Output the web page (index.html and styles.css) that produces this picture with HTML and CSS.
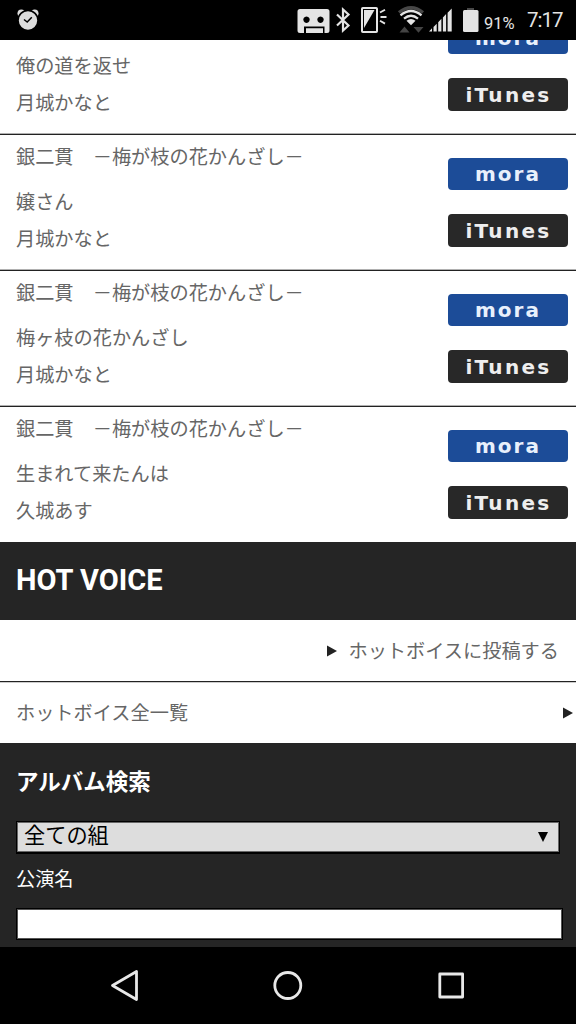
FILE: index.html
```html
<!DOCTYPE html>
<html lang="ja">
<head>
    <meta charset="UTF-8">
    <meta name="viewport" content="width=device-width, initial-scale=1.0">
    <title>HOT VOICE</title>
    <link rel="stylesheet" href="styles.css">
</head>
<body>
    <header class="status-bar">
        <svg class="alarm" width="22" height="22" viewBox="0 0 22 22">
            <circle cx="4.3" cy="4.3" r="3.8" fill="#ddd"/>
            <circle cx="17.7" cy="4.3" r="3.8" fill="#ddd"/>
            <circle cx="11" cy="11.5" r="10" fill="#ddd" stroke="#000" stroke-width="1.6"/>
            <path d="M7 10.500l3.200 2.500 4.600-4.800" fill="none" stroke="#000" stroke-width="1.500"/>
        </svg>
        <svg class="system" width="166" height="40" viewBox="296 0 166 40">
            <!-- 留守番電話 -->
            <path fill="#e4e4e4" fill-rule="evenodd" d="M300 9h27q2.500 0 2.500 2.500v19q0 2.500-2.500 2.500h-2.500v-6.500h-20.500v6.500h-4q-2.500 0-2.500-2.500v-19q0-2.500 2.500-2.500zM306.500 16.500a3.200 3.200 0 1 0 .01 0zM320.500 16.500a3.200 3.200 0 1 0 .01 0zM306 28.300h17v4.700h-17z"/>
            <!-- Bluetooth -->
            <path d="M337 14.500l11.500 11-5.500 5v-21l5.500 5-11.500 11" fill="none" stroke="#e4e4e4" stroke-width="2.200"/>
            <!-- 通知ランプ -->
            <rect x="362" y="8" width="15" height="24" rx=".8" fill="none" stroke="#e4e4e4" stroke-width="2"/>
            <path d="M364 10h10.500l-10.500 18z" fill="#e4e4e4"/>
            <path d="M380 12.500l5-2.800M380.500 17h6M380 20.800l5 2.800" stroke="#e4e4e4" stroke-width="1.800"/>
            <!-- Wi-Fi -->
            <path d="M399 12.500q12-9.500 24 0" fill="none" stroke="#474747" stroke-width="3.400"/>
            <path d="M400.500 15.300q10.500-8.500 21 0M404 18.700q7-5.800 14 0" fill="none" stroke="#e4e4e4" stroke-width="2.300"/>
            <path d="M406.500 20.700q4.500-3.500 9 0l-4.500 4.500z" fill="#e4e4e4"/>
            <path d="M399.500 32.500l5-6 5 6zM413.500 27h10l-5 5.700z" fill="#444"/>
            <!-- 電波 -->
            <path d="M429 31.500l3-3.200v3.200zM433.500 27l3.200-3.300v7.800h-3.200zM438.200 22.200l3.200-3.400v12.700h-3.200zM442.900 17.500l3.200-3.400v17.400h-3.200zM447.600 12.700l4.100-4.200v23h-4.100z" fill="#e4e4e4"/>
        </svg>
        <svg class="battery" width="16" height="24" viewBox="0 0 16 24">
            <path d="M4 0h7v3h-7z" fill="#484848"/>
            <rect x="0" y="2" width="15.500" height="22" rx="1.500" fill="#e4e4e4"/>
        </svg>
        <span class="percent">91%</span>
        <span class="clock">7:17</span>
    </header>

    <main>
        <ul class="songs">
            <li class="song">
                <div class="song-info">
                    <p>俺の道を返せ</p>
                    <p>月城かなと</p>
                </div>
                <div class="shops">
                    <a class="shop mora">mora</a>
                    <a class="shop itunes">iTunes</a>
                </div>
            </li>
            <li class="song">
                <div class="song-info">
                    <h3>銀二貫　－梅が枝の花かんざし－</h3>
                    <p>嬢さん</p>
                    <p>月城かなと</p>
                </div>
                <div class="shops">
                    <a class="shop mora">mora</a>
                    <a class="shop itunes">iTunes</a>
                </div>
            </li>
            <li class="song">
                <div class="song-info">
                    <h3>銀二貫　－梅が枝の花かんざし－</h3>
                    <p>梅ヶ枝の花かんざし</p>
                    <p>月城かなと</p>
                </div>
                <div class="shops">
                    <a class="shop mora">mora</a>
                    <a class="shop itunes">iTunes</a>
                </div>
            </li>
            <li class="song">
                <div class="song-info">
                    <h3>銀二貫　－梅が枝の花かんざし－</h3>
                    <p>生まれて来たんは</p>
                    <p>久城あす</p>
                </div>
                <div class="shops">
                    <a class="shop mora">mora</a>
                    <a class="shop itunes">iTunes</a>
                </div>
            </li>
        </ul>

        <h2 class="voice-title">HOT VOICE</h2>
        <div class="voice-link post">
            <svg width="10" height="12" viewBox="0 0 10 12"><path d="M0 .5l10 5.500-10 5.500z" fill="#222"/></svg>
            <a>ホットボイスに投稿する</a>
        </div>
        <div class="voice-link list">
            <a>ホットボイス全一覧</a>
            <svg width="10" height="12" viewBox="0 0 10 12"><path d="M0 .5l10 5.500-10 5.500z" fill="#222"/></svg>
        </div>

        <form class="search">
            <h2>アルバム検索</h2>
            <div class="select">
                <span>全ての組</span>
                <svg width="10" height="10" viewBox="0 0 10 10"><path d="M0 0h10l-5 10z" fill="#000"/></svg>
            </div>
            <label for="kouen">公演名</label>
            <input type="text" id="kouen" name="kouen">
        </form>
    </main>

    <nav class="nav-bar">
        <svg width="576" height="77" viewBox="0 0 576 77" fill="none" stroke="#e8e8e8" stroke-width="2.800" stroke-linejoin="round">
            <path d="M112.500 38.500l24-14v28z"/>
            <circle cx="287.800" cy="38.500" r="13"/>
            <rect x="439.800" y="27" width="22.800" height="23"/>
        </svg>
    </nav>
</body>
</html>
```

FILE: styles.css
```css
* {
    box-sizing: border-box;
}
body {
    margin: 0;
    height: 1024px;
    display: flex;
    flex-direction: column;
    overflow: hidden;
    background: #000;
    color: #666;
    font-family: Roboto, "Noto Sans CJK JP", sans-serif;
    font-size: 19.2px;
}
h2, h3, p, ul {
    margin: 0;
    padding: 0;
}
.status-bar {
    height: 40px;
    display: flex;
    align-items: flex-start;
    background: #000;
    color: #e4e4e4;
}
.alarm {
    margin: 9px 0 0 17px;
}
.system {
    margin-left: 257px;
}
.battery {
    margin: 8px 0 0 1px;
}
.percent {
    margin: 14px 0 0 5px;
    width: 43px;
    font-size: 16.5px;
    line-height: 20px;
}
.clock {
    margin-top: 8px;
    font-size: 20.5px;
    line-height: 24px;
    letter-spacing: -1px;
}
main {
    height: 907px;
    overflow: hidden;
    background: #fff;
}
.songs {
    list-style: none;
    margin-top: -42px;
}
.song {
    height: 136px;
    display: flex;
    justify-content: space-between;
    padding: 0 8px 12px 16px;
    border-top: 1px solid #222;
    box-shadow: 0 -1px #b0b0b0;
}
.song-info {
    display: flex;
    flex-direction: column;
    justify-content: flex-end;
}
.song h3 {
    font-size: 19.2px;
    font-weight: normal;
    line-height: 37px;
    margin-bottom: 8px;
}
.song p {
    line-height: 37px;
}
.shops {
    display: flex;
    flex-direction: column;
    gap: 24px;
    padding-top: 22.5px;
}
.shop {
    width: 120px;
    height: 32.5px;
    border-radius: 4px;
    color: #fff;
    font: bold 20px/32px "DejaVu Sans", sans-serif;
    letter-spacing: 2px;
    text-align: center;
}
.mora {
    background: #1c4c98;
    color: #e8f0fc;
}
.itunes {
    background: #282828;
    color: #eee;
    line-height: 34px;
    letter-spacing: 2.3px;
    text-indent: 1px;
}
.voice-title {
    height: 78px;
    padding-left: 16px;
    background: #252525;
    color: #fff;
    font-size: 29px;
    line-height: 76px;
}
.voice-link {
    display: flex;
    align-items: center;
}
.voice-link a {
    margin-top: -2px;
}
.post {
    height: 62px;
    justify-content: flex-end;
    gap: 12px;
    padding-right: 17px;
    border-bottom: 1px solid #222;
    box-shadow: 0 1px #ccc;
}
.list {
    height: 61px;
    justify-content: space-between;
    padding: 0 3px 0 16px;
}
.search {
    height: 204px;
    padding: 21px 13px 0 16px;
    background: #252525;
    color: #fff;
}
.search h2 {
    font-size: 22.5px;
    line-height: 36px;
}
.select {
    width: 544px;
    height: 33px;
    margin-top: 21px;
    display: flex;
    align-items: center;
    justify-content: space-between;
    padding: 0 11px 0 7px;
    border: 1px solid #000;
    border-bottom-width: 2px;
    box-shadow: inset 0 0 0 1px #666;
    background: #ddd;
    color: #000;
    font-size: 21.2px;
    line-height: 28px;
}
.select span {
    margin-top: -2px;
}
.search label {
    display: block;
    margin-top: 11px;
    line-height: 30px;
}
.search input {
    display: block;
    width: 547px;
    height: 32px;
    margin-top: 13px;
    border: 1px solid #000;
    box-shadow: inset 0 0 0 1px #555;
    background: #fff;
}
.nav-bar {
    height: 77px;
}
```
